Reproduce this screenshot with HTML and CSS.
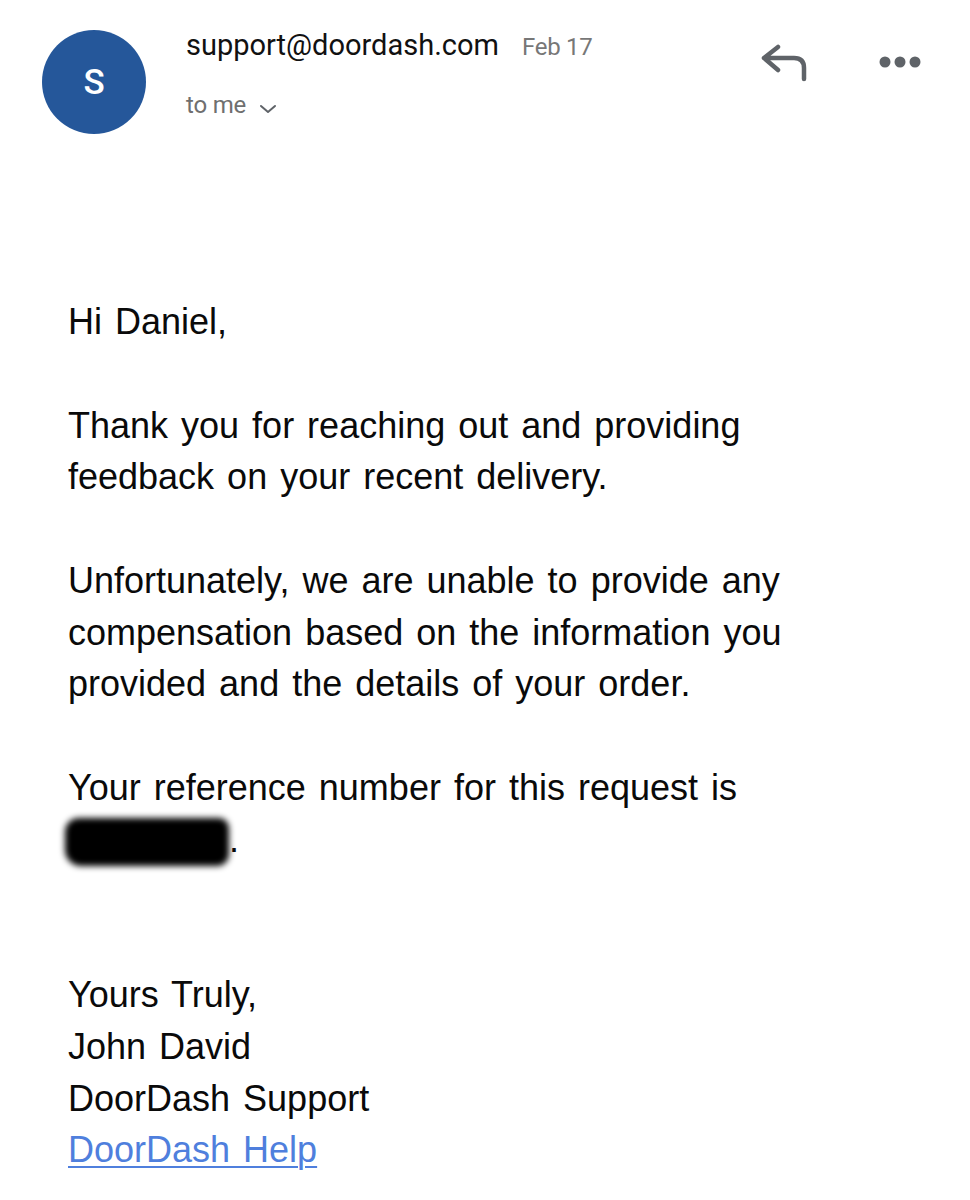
FILE: index.html
```html
<!DOCTYPE html>
<html>
<head>
<meta charset="utf-8">
<link rel="stylesheet" href="styles.css">
</head>
<body>
<div class="header">
  <div class="avatar">S</div>
  <div class="meta">
    <div class="from-row"><span class="from">support@doordash.com</span><span class="date">Feb 17</span></div>
    <div class="to-row"><span class="to">to me</span>
      <svg class="chev" width="18" height="10" viewBox="0 0 18 10"><path d="M2 2 L9 8 L16 2" fill="none" stroke="#5f6368" stroke-width="2" stroke-linecap="round" stroke-linejoin="round"/></svg>
    </div>
  </div>
  <div class="actions">
    <svg class="reply" width="50" height="40" viewBox="0 0 50 40"><path d="M18 3 L4 14 L18 26 M4 14 H34 Q44 14 44 24 V35" fill="none" stroke="#5f6368" stroke-width="4.5" stroke-linecap="round" stroke-linejoin="round"/></svg>
    <svg class="more" width="44" height="14" viewBox="0 0 44 14"><circle cx="7" cy="7" r="5.5" fill="#5f6368"/><circle cx="22" cy="7" r="5.5" fill="#5f6368"/><circle cx="37" cy="7" r="5.5" fill="#5f6368"/></svg>
  </div>
</div>
<div class="body">
  <p>Hi Daniel,</p>
  <p>Thank you for reaching out and providing<br>feedback on your recent delivery.</p>
  <p>Unfortunately, we are unable to provide any<br>compensation based on the information you<br>provided and the details of your order.</p>
  <p>Your reference number for this request is<br><span class="redact"></span>.</p>
  <p class="sig">Yours Truly,<br>John David<br>DoorDash Support<br><a href="#" class="link">DoorDash Help</a></p>
</div>
</body>
</html>
```

FILE: styles.css
```css
html, body {
  margin: 0;
  padding: 0;
  background: #ffffff;
}
body {
  width: 970px;
  height: 1200px;
  overflow: hidden;
}
.header {
  display: flex;
  align-items: flex-start;
  padding: 30px 0 0 42px;
}
.avatar {
  width: 104px;
  height: 104px;
  border-radius: 50%;
  background: #25579a;
  color: #ffffff;
  font-family: Roboto, "Liberation Sans", sans-serif;
  font-weight: 500;
  font-size: 35px;
  display: flex;
  align-items: center;
  justify-content: center;
  flex-shrink: 0;
}
.meta {
  margin-left: 40px;
  margin-top: -2px;
  font-family: Roboto, "Liberation Sans", sans-serif;
}
.from-row {
  display: flex;
  align-items: baseline;
  height: 36px;
}
.from {
  font-size: 29px;
  color: #111111;
}
.date {
  font-size: 24px;
  color: #777777;
  margin-left: 23px;
  letter-spacing: -0.3px;
}
.to-row {
  display: flex;
  align-items: center;
  margin-top: 27px;
}
.to {
  font-size: 24px;
  color: #6f6f6f;
  letter-spacing: -0.2px;
}
.chev {
  margin-left: 13px;
  margin-top: 7px;
}
.actions {
  margin-left: auto;
  margin-right: 48px;
  display: flex;
  align-items: flex-start;
  gap: 68px;
  margin-top: 14px;
}
.more {
  margin-top: 11px;
}
.body {
  padding: 162px 0 0 68px;
  font-family: "Liberation Sans", Arial, sans-serif;
  font-size: 36px;
  line-height: 51.75px;
  color: #0a0a0a;
  word-spacing: 3px;
}
.body p {
  margin: 0 0 51.75px 0;
}
.body p.sig {
  margin-top: 103.5px;
}
.redact {
  display: inline-block;
  width: 164px;
  height: 48px;
  background: #000000;
  border-radius: 14px 10px 12px 16px;
  filter: blur(3px);
  vertical-align: -14px;
  margin-left: -3px;
}
.link {
  color: #4f7fdd;
  text-decoration: underline;
  text-decoration-thickness: 2px;
  text-underline-offset: 4px;
}
```
